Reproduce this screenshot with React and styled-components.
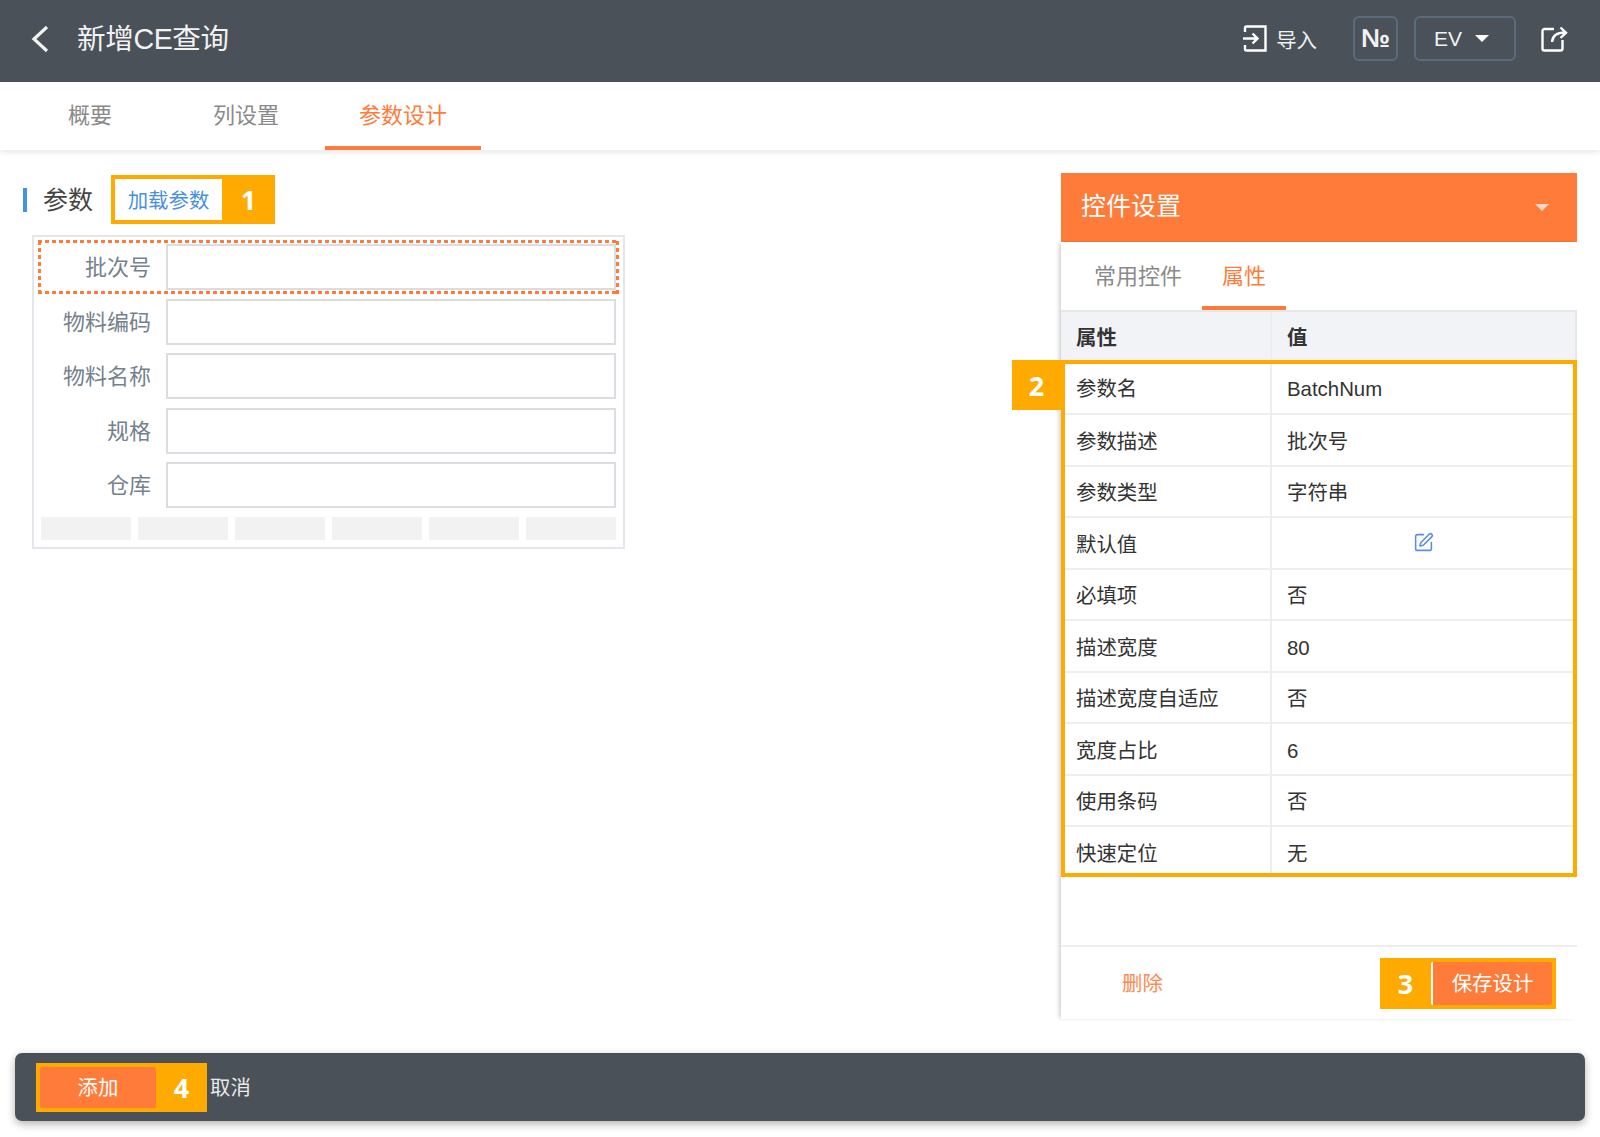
import React from 'react';
import styled, { createGlobalStyle } from 'styled-components';
import { SquarePen } from 'lucide-react';

const ORANGE = '#ff7b3a';
const MARK = '#ffaa00';
const DARK = '#4a5158';

const GlobalStyle = createGlobalStyle`
  html, body {
    margin: 0;
    padding: 0;
    background: #fff;
  }
  body {
    font-family: "Liberation Sans", "Noto Sans CJK SC", sans-serif;
  }
  * {
    box-sizing: border-box;
  }
`;

const Page = styled.div`
  width: 1600px;
  height: 1137px;
  display: flex;
  flex-direction: column;
  overflow: hidden;
`;

const Header = styled.header`
  height: 82px;
  flex: none;
  display: flex;
  align-items: center;
  padding: 0 32px 5px 31px;
  background: ${DARK};
  color: #f2f2f2;
`;

const Title = styled.h1`
  margin: 0 0 0 28px;
  font-size: 28.6px;
  font-weight: 400;
  letter-spacing: -0.4px;
  padding-bottom: 5px;
`;

const HeaderTools = styled.div`
  margin-left: auto;
  display: flex;
  align-items: center;
`;

const ImportLink = styled.div`
  display: flex;
  align-items: center;
  gap: 9px;
  font-size: 20.4px;
  margin-right: 36px;
`;

const ToolButton = styled.div`
  height: 45px;
  width: ${(p) => p.$width}px;
  margin-right: ${(p) => p.$right}px;
  padding-right: ${(p) => p.$pad || 0}px;
  display: flex;
  align-items: center;
  justify-content: center;
  gap: 13px;
  border: 2px solid #5a6b7e;
  border-radius: 6px;
  font-size: ${(p) => p.$size}px;
  font-weight: ${(p) => p.$weight || 400};
`;

const Caret = styled.span`
  width: 0;
  height: 0;
  border-left: 7px solid transparent;
  border-right: 7px solid transparent;
  border-top: 7px solid ${(p) => p.$color || '#fff'};
`;

const TabBar = styled.nav`
  height: 68px;
  flex: none;
  display: flex;
  padding-left: 34px;
  background: #fff;
  box-shadow: 0 2px 6px rgba(0, 0, 0, 0.1);
  position: relative;
`;

const Tab = styled.div`
  padding: 0 34px 2px;
  margin-right: ${(p) => p.$right || 0}px;
  display: flex;
  align-items: center;
  font-size: 22px;
  color: ${(p) => (p.$active ? ORANGE : '#8a8a8a')};
  border-bottom: 4px solid ${(p) => (p.$active ? ORANGE : 'transparent')};
`;

const Content = styled.main`
  flex: 1;
  min-height: 0;
  display: flex;
  justify-content: space-between;
  align-items: flex-start;
  padding-right: 23px;
`;

const LeftColumn = styled.section`
  padding: 25px 0 0 23px;
`;

const SectionRow = styled.div`
  display: flex;
  align-items: center;
`;

const SectionBar = styled.span`
  width: 4px;
  height: 24px;
  background: #4a90e2;
  margin-right: 16px;
`;

const SectionTitle = styled.span`
  font-size: 25px;
  color: #444;
  margin-right: 18px;
  padding-bottom: 3px;
`;

const MarkBox = styled.div`
  display: flex;
  align-items: stretch;
  padding: 4px;
  background: ${MARK};
  height: ${(p) => p.$height}px;
`;

const MarkNumber = styled.span`
  width: ${(p) => p.$width || 51}px;
  flex: none;
  display: flex;
  align-items: center;
  justify-content: center;
  font-size: 27px;
  font-weight: 700;
  color: #fff;
  font-family: "Open Sans", "Liberation Sans", sans-serif;
  margin: ${(p) => (p.$lead ? '0 0 0 -4px' : '0 -4px 0 0')};
`;

const LoadButton = styled.div`
  width: 107px;
  padding-bottom: 2px;
  display: flex;
  align-items: center;
  justify-content: center;
  background: #fff;
  color: #4a90e2;
  font-size: 20.4px;
`;

const FormCanvas = styled.div`
  width: 593px;
  margin: 11px 0 0 9px;
  padding: 7px 0 7px 0;
  border: 2px solid #e4e6ed;
`;

const FormRows = styled.div`
  display: flex;
  flex-direction: column;
  gap: 8.6px;
`;

const FormRow = styled.div`
  position: relative;
  display: grid;
  grid-template-columns: 117px 450px;
  column-gap: 15px;
  align-items: center;

  ${(p) =>
    p.$selected &&
    `
    &::after {
      content: "";
      position: absolute;
      left: 4px;
      right: 4px;
      top: -4px;
      bottom: -4px;
      background:
        repeating-linear-gradient(90deg, ${ORANGE} 0 4px, transparent 4px 7px) top / 100% 3px no-repeat,
        repeating-linear-gradient(90deg, ${ORANGE} 0 4px, transparent 4px 7px) bottom / 100% 3px no-repeat,
        repeating-linear-gradient(0deg, ${ORANGE} 0 4px, transparent 4px 7px) left / 3px 100% no-repeat,
        repeating-linear-gradient(0deg, ${ORANGE} 0 4px, transparent 4px 7px) right / 3px 100% no-repeat;
    }
  `}
`;

const FormLabel = styled.label`
  text-align: right;
  font-size: 22px;
  color: #75818e;
  padding-bottom: 4px;
`;

const FormInput = styled.div`
  height: 46px;
  border: 2px solid #dcdde0;
`;

const Tiles = styled.div`
  display: flex;
  gap: 7.5px;
  margin: 9px 0 0 7px;
  width: 575px;
`;

const Tile = styled.span`
  flex: 1;
  height: 23px;
  background: #f2f2f2;
`;

const SidePanel = styled.aside`
  width: 516px;
  height: 846px;
  margin-top: 23px;
  display: flex;
  flex-direction: column;
`;

const PanelHead = styled.div`
  height: 69px;
  flex: none;
  display: flex;
  align-items: center;
  justify-content: space-between;
  padding: 0 28px 0 20px;
  background: ${ORANGE};
  color: #fff;
  font-size: 25px;
`;

const PanelHeadTitle = styled.span`
  padding-bottom: 7px;
`;

const PanelBody = styled.div`
  flex: 1;
  display: flex;
  flex-direction: column;
  box-shadow: -3px 0 4px -1px rgba(0, 0, 0, 0.18);
`;

const SubTabs = styled.div`
  height: 68px;
  flex: none;
  display: flex;
  gap: 10px;
  padding-left: 23px;
`;

const SubTab = styled.div`
  padding: 0 10px;
  display: flex;
  align-items: center;
  font-size: 22px;
  width: ${(p) => (p.$active ? '84px' : 'auto')};
  justify-content: center;
  color: ${(p) => (p.$active ? ORANGE : '#8a8a8a')};
  border-bottom: 4px solid ${(p) => (p.$active ? ORANGE : 'transparent')};
`;

const TableHead = styled.div`
  height: 50px;
  padding-bottom: 1px;
  display: grid;
  grid-template-columns: 211px 1fr;
  align-items: center;
  background: #f2f3f7;
  border-top: 2px solid #e6e7ea;
  border-right: 2px solid #e6e7ea;
  font-size: 20.4px;
  font-weight: 700;
  color: #333;
`;

const TableRows = styled.div`
  position: relative;
`;

const TableRow = styled.div`
  height: 51.5px;
  display: grid;
  grid-template-columns: 211px 1fr;
  align-items: center;
  border-bottom: 2px solid #eeeef0;
  font-size: 20.4px;
  color: #333;

  &:first-child {
    height: 55px;
  }

  &:nth-child(10) {
    height: 50px;
    border-bottom: 0;
  }
`;

const NameCell = styled.div`
  height: 100%;
  display: flex;
  align-items: center;
  padding-left: 15px;
  border-right: 2px solid #eeeef0;
`;

const ValueCell = styled.div`
  display: flex;
  align-items: center;
  justify-content: ${(p) => (p.$center ? 'center' : 'flex-start')};
  padding-left: ${(p) => (p.$center ? 0 : 15)}px;
  padding-top: ${(p) => (p.$latin ? 5 : 0)}px;
`;

const EditIcon = styled(SquarePen)`
  width: 21px;
  height: 21px;
  margin-right: 2px;
  color: #5b8de0;
  stroke-width: 1.8;
`;

const TableFrame = styled.div`
  position: absolute;
  inset: 0;
  border: 4px solid ${MARK};
  pointer-events: none;
`;

const TableTag = styled.span`
  position: absolute;
  left: -49px;
  top: 0;
  width: 49px;
  height: 50px;
  display: flex;
  align-items: center;
  justify-content: center;
  background: ${MARK};
  color: #fff;
  font-size: 27px;
  font-weight: 700;
  font-family: "Open Sans", "Liberation Sans", sans-serif;
`;

const PanelFooter = styled.div`
  margin-top: auto;
  height: 74px;
  display: flex;
  align-items: center;
  justify-content: space-between;
  padding: 0 21px 0 61px;
  border-top: 2px solid #eeeef0;
`;

const DeleteLink = styled.span`
  font-size: 20.4px;
  color: #ff8a52;
  padding-bottom: 2px;
`;

const PrimaryButton = styled.div`
  width: ${(p) => p.$width}px;
  padding-bottom: 2px;
  display: flex;
  align-items: center;
  justify-content: center;
  background: ${ORANGE};
  color: #fff;
  font-size: 20.4px;
  border-radius: 2px;
  ${(p) => p.$edge && 'border-left: 2px solid #fff;'}
`;

const BottomBar = styled.footer`
  height: 68px;
  flex: none;
  margin: 0 15px 16px;
  padding-left: 21px;
  display: flex;
  align-items: center;
  background: ${DARK};
  border-radius: 7px;
  box-shadow: 0 3px 8px rgba(0, 0, 0, 0.3);
`;

const CancelLink = styled.span`
  margin-left: 3px;
  font-size: 20.4px;
  color: #e8e8e8;
  padding-bottom: 2px;
`;

const BackIcon = () => (
  <svg width="18" height="28" viewBox="0 0 18 28" fill="none" stroke="#f2f2f2" strokeWidth="3.2">
    <path d="M16 2L3 14l13 12" />
  </svg>
);

const ImportIcon = () => (
  <svg width="24" height="27" viewBox="0 0 24 27" fill="none" stroke="#fff" strokeWidth="2.4">
    <path d="M2 7V3a1.5 1.5 0 0 1 1.5-1.5h19V25.5h-19A1.5 1.5 0 0 1 2 24v-4" />
    <path d="M0 13.5h14M9.5 8.5l5 5-5 5" />
  </svg>
);

const ShareIcon = () => (
  <svg width="27" height="27" viewBox="0 0 27 27" fill="none" stroke="#fff" strokeWidth="2.4">
    <path d="M13 4H3.5A2 2 0 0 0 1.5 6v17.5a2 2 0 0 0 2 2h16a2 2 0 0 0 2-2V15" />
    <path d="M11 17c.5-6 5-9.500 13-9.500M19.500 2.500L25 7.800l-5.500 5" />
  </svg>
);

const formLabels = ['批次号', '物料编码', '物料名称', '规格', '仓库'];

const properties = [
  ['参数名', 'BatchNum', true],
  ['参数描述', '批次号'],
  ['参数类型', '字符串'],
  ['默认值', null],
  ['必填项', '否'],
  ['描述宽度', '80', true],
  ['描述宽度自适应', '否'],
  ['宽度占比', '6', true],
  ['使用条码', '否'],
  ['快速定位', '无'],
];

const App = () => (
  <Page>
    <GlobalStyle />
    <Header>
      <BackIcon />
      <Title>新增CE查询</Title>
      <HeaderTools>
        <ImportLink>
          <ImportIcon />
          导入
        </ImportLink>
        <ToolButton $width={45} $right={16} $size={26} $weight={700}>№</ToolButton>
        <ToolButton $width={102} $right={25} $size={21} $pad={7}>
          EV
          <Caret />
        </ToolButton>
        <ShareIcon />
      </HeaderTools>
    </Header>

    <TabBar>
      <Tab $right={33}>概要</Tab>
      <Tab $right={12}>列设置</Tab>
      <Tab $active>参数设计</Tab>
    </TabBar>

    <Content>
      <LeftColumn>
        <SectionRow>
          <SectionBar />
          <SectionTitle>参数</SectionTitle>
          <MarkBox $height={49}>
            <LoadButton>加载参数</LoadButton>
            <MarkNumber $width={53}>1</MarkNumber>
          </MarkBox>
        </SectionRow>
        <FormCanvas>
          <FormRows>
            {formLabels.map((label, index) => (
              <FormRow key={label} $selected={index === 0}>
                <FormLabel>{label}</FormLabel>
                <FormInput />
              </FormRow>
            ))}
          </FormRows>
          <Tiles>
            {[0, 1, 2, 3, 4, 5].map((n) => (
              <Tile key={n} />
            ))}
          </Tiles>
        </FormCanvas>
      </LeftColumn>

      <SidePanel>
        <PanelHead>
          <PanelHeadTitle>控件设置</PanelHeadTitle>
          <Caret $color="rgba(255,255,255,0.7)" />
        </PanelHead>
        <PanelBody>
          <SubTabs>
            <SubTab>常用控件</SubTab>
            <SubTab $active>属性</SubTab>
          </SubTabs>
          <TableHead>
            <NameCell>属性</NameCell>
            <ValueCell>值</ValueCell>
          </TableHead>
          <TableRows>
            {properties.map(([name, value, latin]) => (
              <TableRow key={name}>
                <NameCell>{name}</NameCell>
                {value === null ? (
                  <ValueCell $center><EditIcon /></ValueCell>
                ) : (
                  <ValueCell $latin={latin}>{value}</ValueCell>
                )}
              </TableRow>
            ))}
            <TableFrame />
            <TableTag>2</TableTag>
          </TableRows>
          <PanelFooter>
            <DeleteLink>删除</DeleteLink>
            <MarkBox $height={51}>
              <MarkNumber $lead>3</MarkNumber>
              <PrimaryButton $width={121} $edge>保存设计</PrimaryButton>
            </MarkBox>
          </PanelFooter>
        </PanelBody>
      </SidePanel>
    </Content>

    <BottomBar>
      <MarkBox $height={49}>
        <PrimaryButton $width={116}>添加</PrimaryButton>
        <MarkNumber>4</MarkNumber>
      </MarkBox>
      <CancelLink>取消</CancelLink>
    </BottomBar>
  </Page>
);

export default App;
